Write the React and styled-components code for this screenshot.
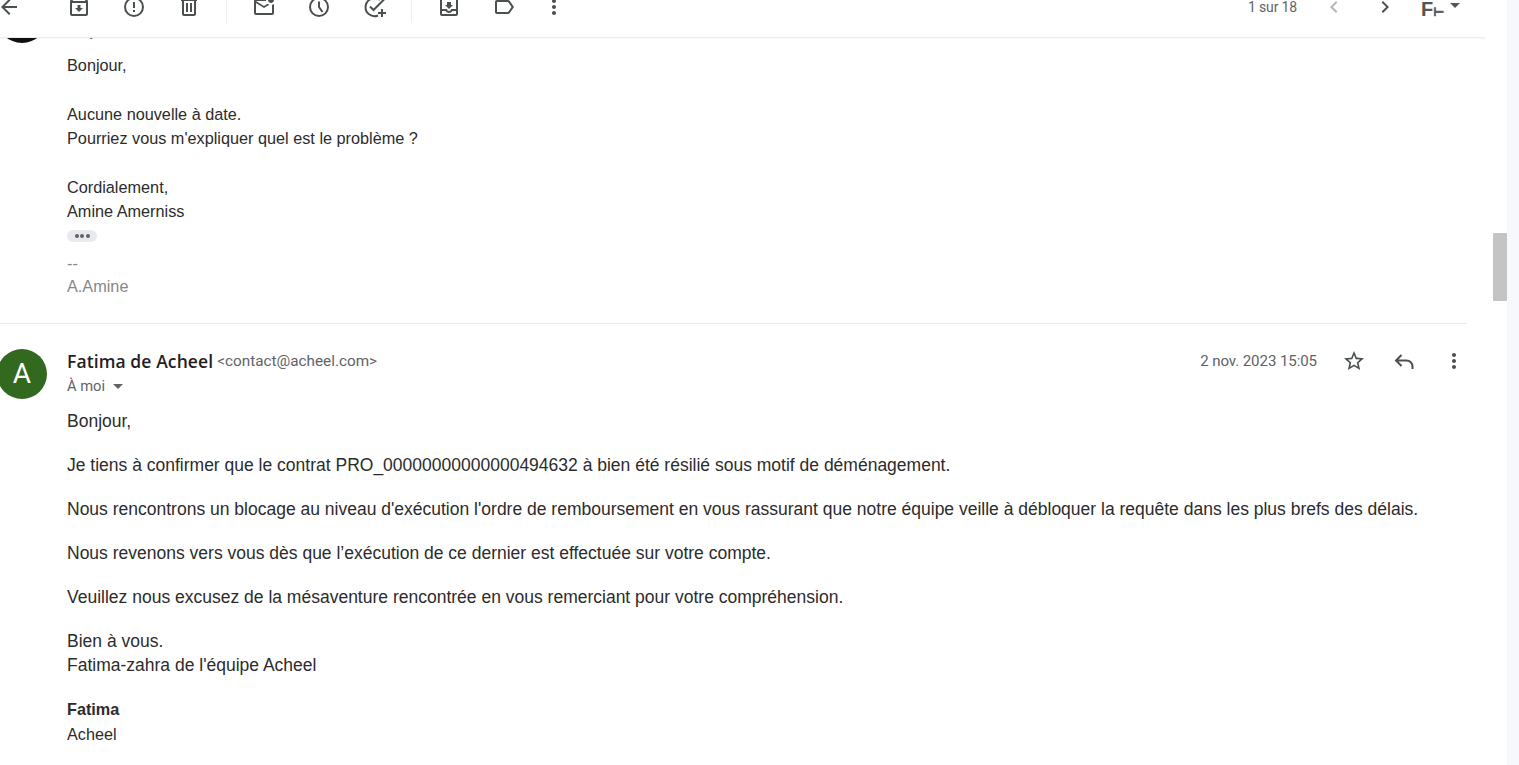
import React from 'react';
import styled, { createGlobalStyle } from 'styled-components';

const GlobalStyle = createGlobalStyle`
  html, body {
    margin: 0;
    padding: 0;
    height: 100%;
    overflow: hidden;
    background: #f6f8fc;
  }
`;

const Page = styled.div`
  display: flex;
  width: 1519px;
  height: 765px;
  overflow: hidden;
  font-family: 'Liberation Sans', Arial, sans-serif;
  color: #222;
`;

const Main = styled.main`
  width: 1493px;
  flex: none;
  background: #fff;
`;

const Track = styled.div`
  width: 14px;
  flex: none;
  padding-top: 233px;
  background: #fff;
  box-sizing: border-box;
`;

const Thumb = styled.div`
  height: 68px;
  background: #c4c4c4;
`;

const Toolbar = styled.header`
  position: relative;
  z-index: 2;
  box-sizing: border-box;
  width: 1485px;
  height: 38px;
  overflow: hidden;
  background: #fff;
  border-bottom: 1px solid #ececec;
  box-shadow: 0 1px 1px rgba(0, 0, 0, 0.03);
`;

const ToolRow = styled.div`
  display: flex;
  align-items: center;
  box-sizing: border-box;
  height: 48px;
  margin-top: -17px;
  padding-right: 25px;
  color: #4c4f50;
`;

const ToolSlot = styled.span`
  flex: none;
  display: flex;
  align-items: center;
  justify-content: center;
  width: 24px;
  margin-left: ${(p) => p.$gap || 0}px;
  color: ${(p) => (p.$dim ? '#b4b6b8' : 'inherit')};
`;

const Divider = styled.span`
  flex: none;
  width: 1px;
  height: 32px;
  margin-left: ${(p) => p.$gap}px;
  background: #eeeeee;
`;

const Pager = styled.span`
  flex: none;
  margin-left: auto;
  font: 14px/20px Roboto, sans-serif;
  letter-spacing: -0.15px;
  color: #5f6368;
`;

const LangGlyph = styled.span`
  flex: none;
  display: flex;
  align-items: baseline;
  width: 24px;
  height: 24px;
  margin-left: 24px;
  padding-top: 7px;
  box-sizing: border-box;
  font-family: 'Liberation Sans', sans-serif;
  font-weight: 700;
  line-height: 14px;
  color: #555;
`;

const LangBig = styled.span`
  font-size: 20px;
`;

const LangSmall = styled.span`
  font-family: 'DejaVu Sans', sans-serif;
  font-size: 12px;
  -webkit-text-stroke: 0.6px #555;
`;

const Caret = styled.span`
  flex: none;
  width: 0;
  height: 0;
  margin: ${(p) => p.$margin};
  border-left: ${(p) => p.$size}px solid transparent;
  border-right: ${(p) => p.$size}px solid transparent;
  border-top: ${(p) => p.$size}px solid ${(p) => p.$color};
`;

const Thread = styled.section`
  padding-right: 26px;
`;

const Message = styled.article`
  display: grid;
  grid-template-columns: 47px minmax(0, 1fr);
  column-gap: 20px;
  padding: ${(p) => p.$padding};
  margin-top: ${(p) => p.$top || 0}px;
  border-bottom: ${(p) => (p.$ruled ? '1px solid #e8eaed' : 'none')};
`;

const Avatar = styled.div`
  width: 50px;
  height: 50px;
  margin-left: -3px;
  border-radius: 50%;
  display: flex;
  align-items: center;
  justify-content: center;
  background: ${(p) => p.$bg};
  color: #fff;
  font: 400 28px Roboto, sans-serif;
`;

const PeekLine = styled.div`
  height: 19px;
  margin-top: 29px;
  font: 14.7px/19px Roboto, sans-serif;
  color: #5f6368;
`;

const SmallBody = styled.div`
  margin-top: 12px;
  font-size: 16.25px;
  line-height: 24.4px;
  color: #2c2c2c;
`;

const BlankLine = styled.div`
  height: 24.4px;
`;

const DotsPill = styled.div`
  display: flex;
  align-items: center;
  justify-content: center;
  gap: 1.5px;
  width: 30px;
  height: 12px;
  margin-top: 6px;
  border-radius: 6px;
  background: #e8eaed;
`;

const Dot = styled.span`
  width: 4px;
  height: 4px;
  border-radius: 50%;
  background: #5f6368;
`;

const Signature = styled.div`
  margin-top: 9px;
  color: #888;
`;

const SignatureName = styled.div`
  margin-top: -1px;
`;

const SenderRow = styled.div`
  display: flex;
  align-items: center;
  height: 24px;
`;

const SenderName = styled.span`
  font: 600 17.5px/24px 'Open Sans', sans-serif;
  letter-spacing: 0.1px;
  color: #1f1f1f;
`;

const SenderMail = styled.span`
  margin-left: 4px;
  font: 15.3px/24px Roboto, sans-serif;
  color: #5f6368;
`;

const DateText = styled.span`
  margin-left: auto;
  font: 15.1px/24px Roboto, sans-serif;
  letter-spacing: -0.1px;
  color: #5f6368;
`;

const ActionIcons = styled.div`
  display: flex;
  align-items: center;
  gap: 26px;
  margin: 0 1px 0 25px;
  color: #4c4f50;
`;

const RecipientRow = styled.div`
  display: flex;
  align-items: center;
  height: 20px;
  margin-top: 3px;
  font: 14.7px/20px Roboto, sans-serif;
  color: #5f6368;
`;

const BigBody = styled.div`
  margin-top: 13px;
  font-size: 17.5px;
  line-height: 24.5px;
  color: #2c2c2c;
`;

const Para = styled.p`
  margin: 0 0 19.5px;
`;

const SignName = styled.strong`
  display: block;
  margin-top: 1px;
  font-size: 16.2px;
`;

const SignLine = styled.div`
  font-size: 16.2px;
`;

const StrokeIcon = ({ size = 24, children }) => (
  <svg width={size} height={size} viewBox="0 0 24 24" fill="none" stroke="currentColor" strokeWidth="2">
    {children}
  </svg>
);

const FillIcon = ({ size = 24, d }) => (
  <svg width={size} height={size} viewBox="0 0 24 24" fill="currentColor">
    <path d={d} />
  </svg>
);

const icons = {
  back: 'M20 11H7.83l5.59-5.59L12 4l-8 8 8 8 1.41-1.41L7.83 13H20v-2z',
  archive:
    'M20.54 5.23l-1.39-1.68C18.88 3.21 18.47 3 18 3H6c-.47 0-.88.21-1.16.55L3.46 5.23C3.17 5.57 3 6.02 3 6.5V19c0 1.1.9 2 2 2h14c1.1 0 2-.9 2-2V6.5c0-.48-.17-.93-.46-1.27zM6.24 5h11.52l.81.97H5.44l.8-.97zM5 19V8h14v11H5zm8.45-9h-2.9v3H8l4 4 4-4h-2.55z',
  trash:
    'M15 4V3H9v1H4v2h1v13c0 1.1.9 2 2 2h10c1.1 0 2-.9 2-2V6h1V4h-5zm2 15H7V6h10v13zM9 8h2v9H9zm4 0h2v9h-2z',
  mail:
    'M22 8.98V18c0 1.1-.9 2-2 2H4c-1.1 0-2-.9-2-2V6c0-1.1.9-2 2-2h10.1c-.06.32-.1.66-.1 1s.04.68.1 1H4l8 5 3.67-2.29c.47.43 1.02.76 1.63.98L12 13 4 8v10h16V9.9c.74-.15 1.42-.48 2-.92zM16 5c0 1.66 1.34 3 3 3s3-1.34 3-3-1.34-3-3-3-3 1.34-3 3z',
  inbox:
    'M19 3H5c-1.1 0-2 .9-2 2v14c0 1.1.9 2 2 2h14c1.1 0 2-.9 2-2V5c0-1.1-.9-2-2-2zm0 16H5v-3h3.56c.69 1.19 1.97 2 3.45 2s2.75-.81 3.45-2H19v3zm0-5h-4.99c0 1.1-.9 2-2 2s-2-.9-2-2H5V5h14v9zM16 10h-2V7h-4v3H8l4 4z',
  label:
    'M17.63 5.84C17.27 5.33 16.67 5 16 5L5 5.01C3.9 5.01 3 5.9 3 7v10c0 1.1.9 1.99 2 1.99L16 19c.67 0 1.27-.33 1.63-.84L22 12l-4.37-6.16zM16 17H5V7h11l3.55 5L16 17z',
  star:
    'M22 9.24l-7.19-.62L12 2 9.19 8.63 2 9.24l5.46 4.73L5.82 21 12 17.27 18.18 21l-1.63-7.03L22 9.24zM12 15.4l-3.76 2.27 1-4.28-3.32-2.88 4.38-.38L12 6.1l1.71 4.04 4.38.38-3.32 2.88 1 4.28L12 15.4z',
  more:
    'M12 8c1.1 0 2-.9 2-2s-.9-2-2-2-2 .9-2 2 .9 2 2 2zm0 2c-1.1 0-2 .9-2 2s.9 2 2 2 2-.9 2-2-.9-2-2-2zm0 6c-1.1 0-2 .9-2 2s.9 2 2 2 2-.9 2-2-.9-2-2-2z',
  prev: 'M15.41 7.41L14 6l-6 6 6 6 1.41-1.41L10.83 12z',
  next: 'M10 6L8.59 7.41 13.17 12l-4.58 4.59L10 18l6-6z',
};

const Report = () => (
  <StrokeIcon>
    <circle cx="12" cy="12" r="9" />
    <path d="M12 7v6M12 15v2" />
  </StrokeIcon>
);

const Snooze = () => (
  <StrokeIcon>
    <circle cx="12" cy="12" r="9" />
    <path d="M12 6.5V12l3.5 5" />
  </StrokeIcon>
);

const AddTask = () => (
  <StrokeIcon>
    <path d="M17 5a9 9 0 1 0-2 15.5" />
    <path d="M7 11.5l3.5 3.5L21 4.5" />
    <path d="M15 18h8M19 14v8" />
  </StrokeIcon>
);

const Reply = () => (
  <StrokeIcon>
    <path d="M9.5 6L4 11.5 9.5 17M4 11.5h10.5a6 6 0 0 1 6 6V20" />
  </StrokeIcon>
);

export default function App() {
  return (
    <Page>
      <GlobalStyle />
      <Main>
        <Toolbar>
          <ToolRow>
            <ToolSlot $gap={-3}><FillIcon d={icons.back} /></ToolSlot>
            <ToolSlot $gap={46}><FillIcon d={icons.archive} /></ToolSlot>
            <ToolSlot $gap={31}><Report /></ToolSlot>
            <ToolSlot $gap={31}><FillIcon d={icons.trash} /></ToolSlot>
            <Divider $gap={25} />
            <ToolSlot $gap={25}><FillIcon d={icons.mail} /></ToolSlot>
            <ToolSlot $gap={31}><Snooze /></ToolSlot>
            <ToolSlot $gap={32}><AddTask /></ToolSlot>
            <Divider $gap={24} />
            <ToolSlot $gap={25}><FillIcon d={icons.inbox} /></ToolSlot>
            <ToolSlot $gap={31}><FillIcon d={icons.label} /></ToolSlot>
            <ToolSlot $gap={26}><FillIcon d={icons.more} /></ToolSlot>
            <Pager>1 sur 18</Pager>
            <ToolSlot $gap={25} $dim><FillIcon d={icons.prev} /></ToolSlot>
            <ToolSlot $gap={27}><FillIcon d={icons.next} /></ToolSlot>
            <LangGlyph><LangBig>F</LangBig><LangSmall>⊢</LangSmall></LangGlyph>
            <Caret $size={5} $color="#555" $margin="-3px 0 0 5px" />
          </ToolRow>
        </Toolbar>
        <Thread>
          <Message $ruled $top={-45} $padding="0 0 24px">
            <Avatar $bg="#111" />
            <div>
              <PeekLine>À Ay</PeekLine>
              <SmallBody>
                <div>Bonjour,</div>
                <BlankLine />
                <div>Aucune nouvelle à date.</div>
                <div>Pourriez vous m'expliquer quel est le problème ?</div>
                <BlankLine />
                <div>Cordialement,</div>
                <div>Amine Amerniss</div>
                <DotsPill><Dot /><Dot /><Dot /></DotsPill>
                <Signature>
                  <div>--</div>
                  <SignatureName>A.Amine</SignatureName>
                </Signature>
              </SmallBody>
            </div>
          </Message>
          <Message $padding="25px 0 0">
            <Avatar $bg="#33691e">A</Avatar>
            <div>
              <SenderRow>
                <SenderName>Fatima de Acheel</SenderName>
                <SenderMail>&lt;contact@acheel.com&gt;</SenderMail>
                <DateText>2 nov. 2023 15:05</DateText>
                <ActionIcons>
                  <FillIcon d={icons.star} />
                  <Reply />
                  <FillIcon d={icons.more} />
                </ActionIcons>
              </SenderRow>
              <RecipientRow>
                À moi
                <Caret $size={5} $color="#5f6368" $margin="2px 0 0 8px" />
              </RecipientRow>
              <BigBody>
                <Para>Bonjour,</Para>
                <Para>Je tiens à confirmer que le contrat PRO_00000000000000494632 à bien été résilié sous motif de déménagement.</Para>
                <Para>Nous rencontrons un blocage au niveau d'exécution l'ordre de remboursement en vous rassurant que notre équipe veille à débloquer la requête dans les plus brefs des délais.</Para>
                <Para>Nous revenons vers vous dès que l’exécution de ce dernier est effectuée sur votre compte.</Para>
                <Para>Veuillez nous excusez de la mésaventure rencontrée en vous remerciant pour votre compréhension.</Para>
                <Para>Bien à vous.<br />Fatima-zahra de l'équipe Acheel</Para>
                <SignName>Fatima</SignName>
                <SignLine>Acheel</SignLine>
              </BigBody>
            </div>
          </Message>
        </Thread>
      </Main>
      <Track><Thumb /></Track>
    </Page>
  );
}
